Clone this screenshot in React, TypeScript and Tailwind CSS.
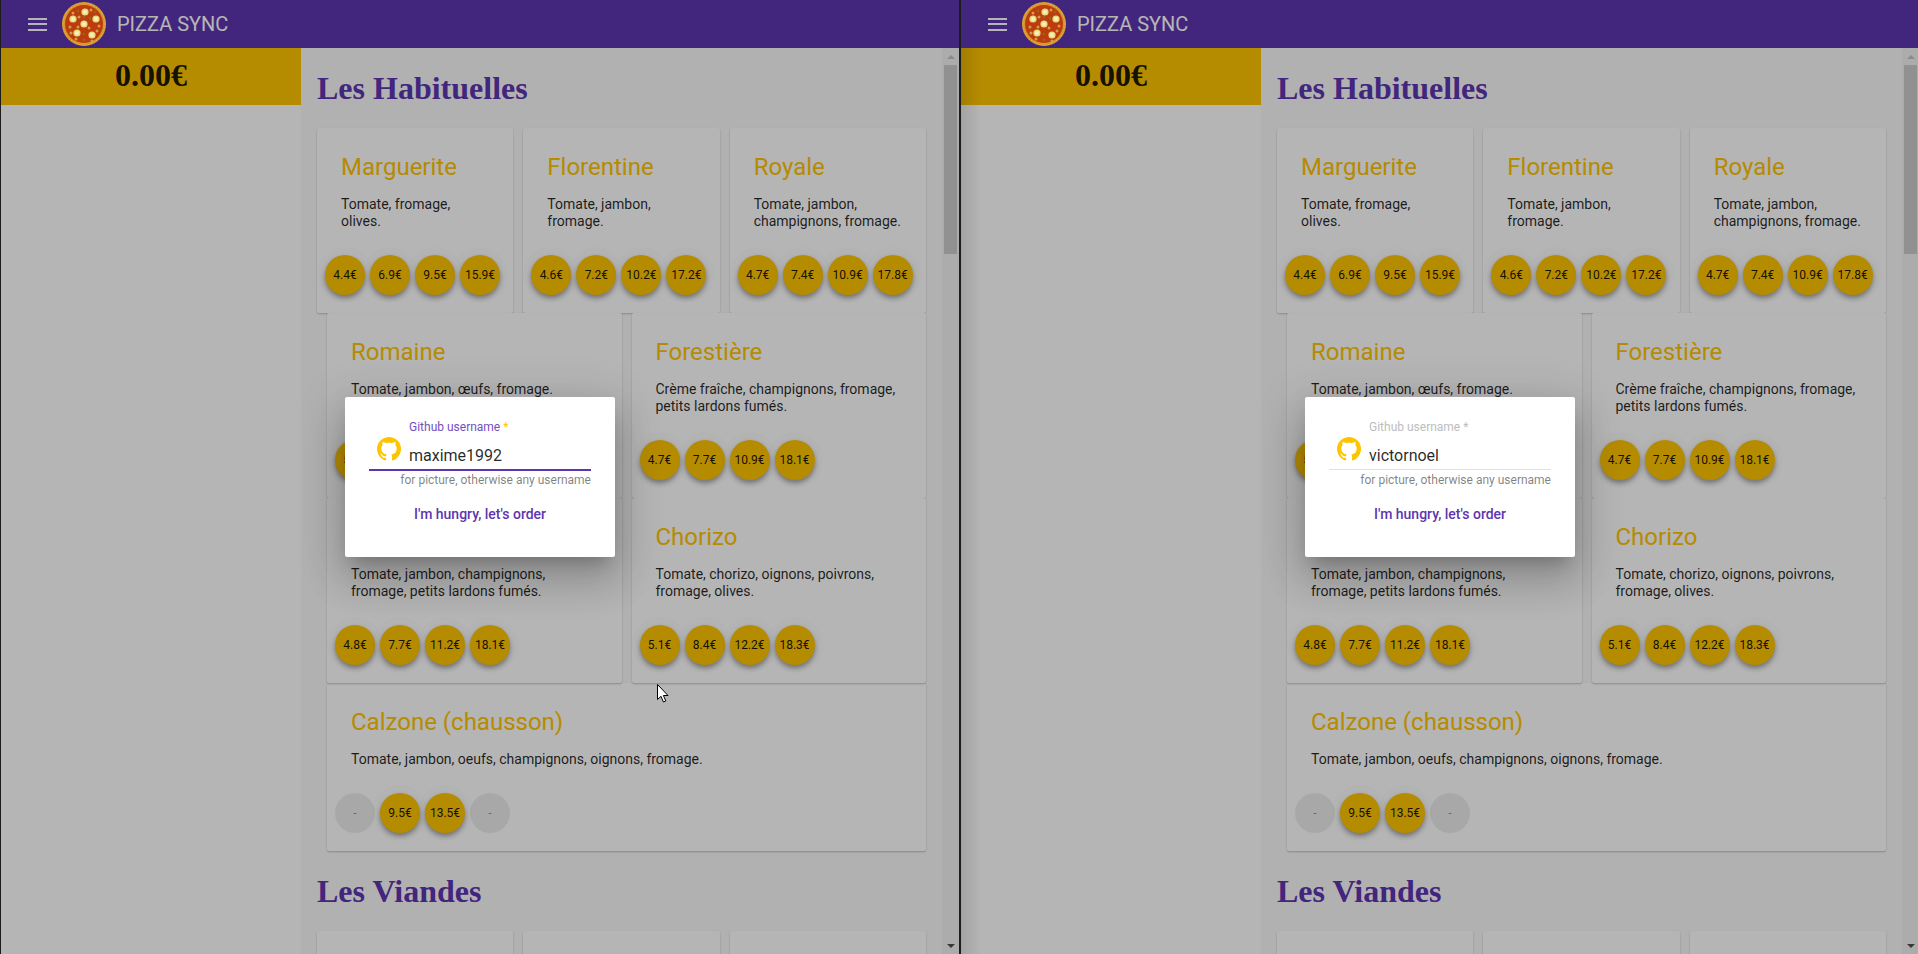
const roboto = "font-['Roboto',sans-serif]";

type Pizza = { name: string; desc: string; prices: string[] };

const habituelles: Pizza[] = [
  { name: "Marguerite", desc: "Tomate, fromage, olives.", prices: ["4.4€", "6.9€", "9.5€", "15.9€"] },
  { name: "Florentine", desc: "Tomate, jambon, fromage.", prices: ["4.6€", "7.2€", "10.2€", "17.2€"] },
  { name: "Royale", desc: "Tomate, jambon, champignons, fromage.", prices: ["4.7€", "7.4€", "10.9€", "17.8€"] },
];

const rows: Pizza[][] = [
  [
    { name: "Romaine", desc: "Tomate, jambon, œufs, fromage.", prices: ["5.1€", "7.7€", "11.2€", "17.9€"] },
    { name: "Forestière", desc: "Crème fraîche, champignons, fromage, petits lardons fumés.", prices: ["4.7€", "7.7€", "10.9€", "18.1€"] },
  ],
  [
    { name: "Paysanne", desc: "Tomate, jambon, champignons, fromage, petits lardons fumés.", prices: ["4.8€", "7.7€", "11.2€", "18.1€"] },
    { name: "Chorizo", desc: "Tomate, chorizo, oignons, poivrons, fromage, olives.", prices: ["5.1€", "8.4€", "12.2€", "18.3€"] },
  ],
];

const calzone: Pizza = {
  name: "Calzone (chausson)",
  desc: "Tomate, jambon, oeufs, champignons, oignons, fromage.",
  prices: ["-", "9.5€", "13.5€", "-"],
};

function PriceButton({ price }: { price: string }) {
  if (price === "-") {
    return (
      <div className="flex h-10 w-10 items-center justify-center rounded-full bg-black/[0.07] text-xs text-black/40">
        -
      </div>
    );
  }
  return (
    <div className="flex h-10 w-10 items-center justify-center rounded-full bg-[#ffc400] text-xs text-black/90 shadow-[0_3px_5px_rgba(0,0,0,0.36),0_0_0_8px_rgba(0,0,0,0.012)]">
      {price}
    </div>
  );
}

function PizzaCard({ pizza }: { pizza: Pizza }) {
  return (
    <div className="flex flex-col rounded-[2px] bg-white shadow-[0_1px_2px_rgba(0,0,0,0.24)]">
      <div className="px-6 pt-[23.5px]">
        <h2 className="h-8 text-2xl leading-8 text-[#ffc400]">{pizza.name}</h2>
        <p className="mt-[13px] text-sm leading-[17px] text-black/85">{pizza.desc}</p>
      </div>
      <div className="mt-auto flex gap-[5px] px-2 pt-[25px] pb-[17.5px]">
        {pizza.prices.map((price, i) => (
          <PriceButton key={i} price={price} />
        ))}
      </div>
    </div>
  );
}

function Heading({ children }: { children: string }) {
  return (
    <h1 className="mt-[22px] mb-[21.3px] font-['Liberation_Serif',serif] text-[32px] leading-[36.5px] font-bold text-[#5e35b1]">
      {children}
    </h1>
  );
}

function PizzaLogo() {
  const flowers = [
    [23, 10],
    [34, 17],
    [22, 22],
    [15, 31],
    [30, 33],
    [11, 17],
  ];
  const bits = [
    [16, 9], [29, 8], [17, 15], [28, 16], [37, 24], [8, 25], [22, 15], [27, 26],
    [16, 25], [22, 32], [35, 29], [9, 31], [22, 38], [14, 37], [30, 39], [33, 10], [11, 11],
  ];
  return (
    <svg viewBox="0 0 44 44" className="relative z-20 h-[44px] w-[44px]">
      <circle cx="22" cy="22" r="22" fill="#d4982e" />
      <circle cx="22" cy="22" r="21" fill="none" stroke="#e3b04a" strokeWidth="1" strokeDasharray="1.5 1.5" />
      <circle cx="22" cy="22" r="19" fill="#bf3a0c" />
      {bits.map(([x, y], i) => (
        <circle key={i} cx={x} cy={y} r="1.5" fill={i % 3 === 0 ? "#8a6a20" : "#c9a050"} />
      ))}
      {flowers.map(([x, y], i) => (
        <g key={i}>
          <circle cx={x} cy={y} r="3.6" fill="#e9dd7a" />
          <circle cx={x} cy={y} r="2" fill="#f2eecb" />
        </g>
      ))}
    </svg>
  );
}

function Scrollbar() {
  return (
    <div className="flex w-[17px] shrink-0 flex-col bg-[#f3f3f3]">
      <div className="flex h-[17px] items-center justify-center">
        <div className="h-0 w-0 border-x-[4px] border-b-[4px] border-x-transparent border-b-[#c4c4c4]" />
      </div>
      <div className="mx-[2px] h-[189px] bg-[#cdcdcd]" />
      <div className="flex-1" />
      <div className="flex h-[17px] items-center justify-center">
        <div className="h-0 w-0 border-x-[4px] border-t-[4px] border-x-transparent border-t-[#505050]" />
      </div>
    </div>
  );
}

function GithubMark() {
  return (
    <svg viewBox="2 2 20 20" className="h-6 w-6 shrink-0" fill="#ffc400">
      <path d="M12,2A10,10 0 0,0 2,12C2,16.42 4.87,20.17 8.84,21.5C9.34,21.58 9.5,21.27 9.5,21V19.31C6.73,19.91 6.14,17.97 6.14,17.97C5.68,16.81 5.03,16.5 5.03,16.5C4.12,15.88 5.1,15.9 5.1,15.9C6.1,15.97 6.63,16.93 6.63,16.93C7.5,18.45 8.97,18 9.54,17.76C9.63,17.11 9.89,16.67 10.17,16.42C7.95,16.17 5.62,15.31 5.62,11.5C5.62,10.39 6,9.5 6.65,8.79C6.55,8.54 6.2,7.5 6.75,6.15C6.75,6.15 7.59,5.88 9.5,7.17C10.29,6.95 11.15,6.84 12,6.84C12.85,6.84 13.71,6.95 14.5,7.17C16.41,5.88 17.25,6.15 17.25,6.15C17.8,7.5 17.45,8.54 17.35,8.79C18,9.5 18.38,10.39 18.38,11.5C18.38,15.32 16.04,16.16 13.81,16.41C14.17,16.72 14.5,17.33 14.5,18.26V21C14.5,21.27 14.66,21.59 15.17,21.5C19.14,20.16 22,16.42 22,12A10,10 0 0,0 12,2Z" />
    </svg>
  );
}

function LoginDialog({ username, focused }: { username: string; focused?: boolean }) {
  return (
    <div className="flex h-[160px] w-[270px] flex-col rounded-[2px] bg-white px-6 pt-[23px] shadow-[0_11px_15px_-7px_rgba(0,0,0,0.2),0_24px_38px_3px_rgba(0,0,0,0.14),0_9px_46px_8px_rgba(0,0,0,0.12)]">
      <div className={focused ? "pl-10 text-xs leading-[14px] text-[#7350c0]" : "pl-10 text-xs leading-[14px] text-[#bdbdbd]"}>
        Github username <span className={focused ? "text-[#ffc400]" : ""}>*</span>
      </div>
      <div className={focused ? "flex h-[37px] border-b-2 border-[#5e35b1] pl-2" : "flex h-[36px] border-b border-[#e0e0e0] pl-2"}>
        <div className="mt-[3px]">
          <GithubMark />
        </div>
        <div className="mt-[12px] ml-2 text-base leading-[19px] text-black/85">{username}</div>
      </div>
      <div className={focused ? "mt-[2px] text-right text-xs leading-[14px] text-black/50" : "mt-[3px] text-right text-xs leading-[14px] text-black/50"}>
        for picture, otherwise any username
      </div>
      <div className="mt-[17px] text-center text-sm leading-5 font-medium text-[#5e35b1]">I'm hungry, let's order</div>
    </div>
  );
}

function PizzaWindow({ username, focused, edge }: { username: string; focused?: boolean; edge?: boolean }) {
  return (
    <div className={`relative flex h-full w-[958px] shrink-0 flex-col overflow-hidden bg-white ${roboto}`}>
      <header className="flex h-12 shrink-0 items-center bg-[#5e35b1] text-white">
        <div className="ml-[27px] flex w-[19px] flex-col gap-[3.5px]">
          <span className="h-[2px] bg-white" />
          <span className="h-[2px] bg-white" />
          <span className="h-[2px] bg-white" />
        </div>
        <div className="ml-[15px]">
          <PizzaLogo />
        </div>
        <span className="ml-[11px] text-xl">PIZZA SYNC</span>
      </header>

      <div className="flex min-h-0 flex-1">
        <aside className="w-[300px] shrink-0 bg-white">
          <div className="flex h-[57px] justify-center bg-[#ffc400] pt-[9px] font-['Liberation_Serif',serif] text-[32px] leading-[37px] font-bold text-black/90">
            0.00€
          </div>
        </aside>

        <main className="min-w-0 flex-1 overflow-hidden bg-[#fafafa] pr-4 pl-4">
          <Heading>Les Habituelles</Heading>
          <div className="grid grid-cols-3 gap-x-[10px]">
            {habituelles.map((pizza) => (
              <PizzaCard key={pizza.name} pizza={pizza} />
            ))}
          </div>
          {rows.map((row, i) => (
            <div key={i} className="ml-[10px] grid grid-cols-2 gap-x-[10px]">
              {row.map((pizza) => (
                <PizzaCard key={pizza.name} pizza={pizza} />
              ))}
            </div>
          ))}
          <div className="ml-[10px]">
            <PizzaCard pizza={calzone} />
          </div>
          <Heading>Les Viandes</Heading>
          <div className="grid grid-cols-3 gap-x-[10px]">
            <div className="h-[185px] rounded-[2px] bg-white shadow-[0_1px_2px_rgba(0,0,0,0.24)]" />
            <div className="h-[185px] rounded-[2px] bg-white shadow-[0_1px_2px_rgba(0,0,0,0.24)]" />
            <div className="h-[185px] rounded-[2px] bg-white shadow-[0_1px_2px_rgba(0,0,0,0.24)]" />
          </div>
        </main>

        <Scrollbar />
      </div>

      {edge && <div className="absolute top-12 bottom-0 left-0 w-5 bg-gradient-to-r from-black/10 to-transparent" />}

      <div className="absolute inset-0 z-10 flex items-center justify-center bg-black/[0.29]">
        <LoginDialog username={username} focused={focused} />
      </div>
    </div>
  );
}

export default function App() {
  return (
    <div className="relative flex h-[954px] w-[1918px] overflow-hidden bg-[#1c1c1c] pl-px">
      <PizzaWindow username="maxime1992" focused />
      <div className="w-[2px] shrink-0" />
      <PizzaWindow username="victornoel" edge />
      {/* recorded mouse pointer */}
      <svg viewBox="0 0 12 19" className="absolute top-[684px] left-[657px] z-30 h-[19px] w-[12px]">
        <path d="M0.5 0.5V15.5L4 12.3L6.4 18L8.8 17L6.4 11.5H11Z" fill="#ffffff" stroke="#000000" strokeWidth="1" />
      </svg>
    </div>
  );
}
